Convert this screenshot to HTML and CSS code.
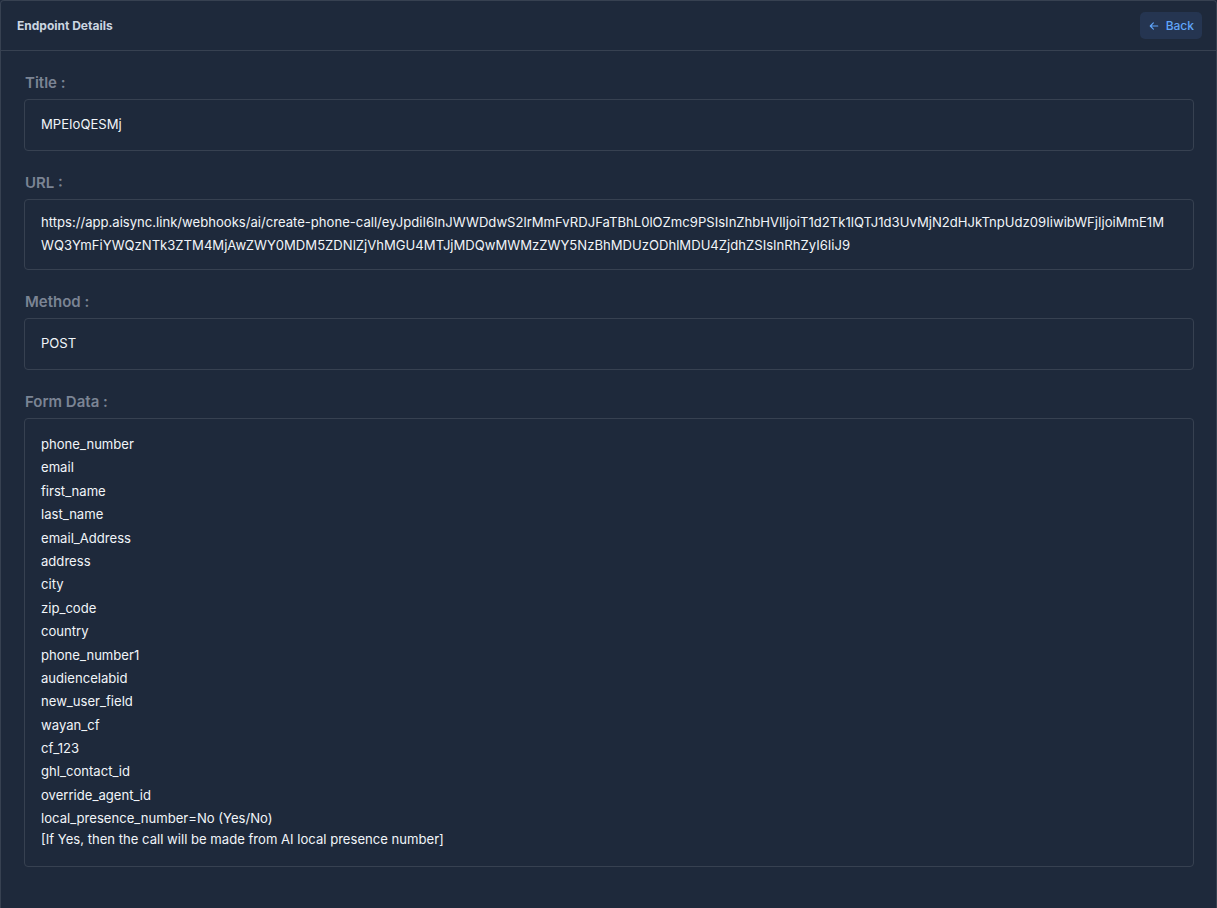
FILE: index.html
```html
<!DOCTYPE html>
<html lang="en">
<head>
    <meta charset="UTF-8">
    <meta name="viewport" content="width=device-width, initial-scale=1.0">
    <title>Endpoint Details</title>
    <link rel="stylesheet" href="styles.css">
</head>
<body>
    <div class="card">
        <div class="card-header">
            <h2 class="card-title">Endpoint Details</h2>
            <button class="back-btn">
                <svg viewBox="0 0 16 16" width="10" height="10" fill="none" stroke="currentColor" stroke-width="1.8" stroke-linecap="round" stroke-linejoin="round"><path d="M14 8H2.5M7 3L2 8l5 5"/></svg>
                Back
            </button>
        </div>
        <div class="card-body">
            <div class="field">
                <label class="field-label">Title :</label>
                <div class="field-box">MPEIoQESMj</div>
            </div>
            <div class="field">
                <label class="field-label">URL :</label>
                <div class="field-box url-box">https://app.aisync.link/webhooks/ai/create-phone-call/eyJpdiI6InJWWDdwS2lrMmFvRDJFaTBhL0lOZmc9PSIsInZhbHVlIjoiT1d2Tk1lQTJ1d3UvMjN2dHJkTnpUdz09IiwibWFjIjoiMmE1MWQ3YmFiYWQzNTk3ZTM4MjAwZWY0MDM5ZDNlZjVhMGU4MTJjMDQwMWMzZWY5NzBhMDUzODhlMDU4ZjdhZSIsInRhZyI6IiJ9</div>
            </div>
            <div class="field">
                <label class="field-label">Method :</label>
                <div class="field-box">POST</div>
            </div>
            <div class="field">
                <label class="field-label">Form Data :</label>
                <div class="field-box form-box">
                    <div class="form-item">phone_number</div>
                    <div class="form-item">email</div>
                    <div class="form-item">first_name</div>
                    <div class="form-item">last_name</div>
                    <div class="form-item">email_Address</div>
                    <div class="form-item">address</div>
                    <div class="form-item">city</div>
                    <div class="form-item">zip_code</div>
                    <div class="form-item">country</div>
                    <div class="form-item">phone_number1</div>
                    <div class="form-item">audiencelabid</div>
                    <div class="form-item">new_user_field</div>
                    <div class="form-item">wayan_cf</div>
                    <div class="form-item">cf_123</div>
                    <div class="form-item">ghl_contact_id</div>
                    <div class="form-item">override_agent_id</div>
                    <div class="form-item">local_presence_number=No (Yes/No)<br>[If Yes, then the call will be made from AI local presence number]</div>
                </div>
            </div>
        </div>
    </div>
</body>
</html>
```

FILE: styles.css
```css
body {
    margin: 0;
    background-color: #1e293b;
    font-family: "Inter", "Liberation Sans", sans-serif;
    color: #f1f5f9;
    height: 100vh;
    overflow: hidden;
}
.card {
    background-color: #1e293b;
    border: 1px solid #374151;
    border-bottom: none;
    border-radius: 4px 4px 0 0;
    min-height: 100vh;
}
.card-header {
    display: flex;
    align-items: center;
    justify-content: space-between;
    height: 49px;
    padding: 0 14px 0 16px;
    border-bottom: 1px solid #374151;
}
.card-title {
    margin: 0;
    font-size: 12px;
    font-weight: 700;
    color: #cbd5e1;
}
.back-btn {
    display: flex;
    align-items: center;
    gap: 7px;
    height: 27px;
    padding: 0 8px 0 9px;
    border: none;
    border-radius: 5px;
    background-color: #253551;
    color: #60a5fa;
    font-family: inherit;
    font-size: 12px;
    font-weight: 500;
    cursor: pointer;
}
.card-body {
    padding: 21px 22px 0 23px;
}
.field {
    margin-bottom: 21px;
}
.field-label {
    display: block;
    margin-left: 1px;
    margin-bottom: 5px;
    font-size: 15px;
    font-weight: 600;
    line-height: 22px;
    color: #7b8494;
}
.field-box {
    padding: 14px 16px 15px;
    border: 1px solid #374151;
    border-radius: 4px;
    font-size: 13.1px;
    line-height: 21px;
    color: #f1f5f9;
}
.url-box {
    padding: 11px 22px 12px 16px;
    line-height: 23px;
    word-break: break-all;
}
.form-box {
    padding: 15px 16px 16px;
}
.form-item {
    margin-bottom: 2.4px;
}
.form-item:last-child {
    margin-bottom: 0;
}
```
